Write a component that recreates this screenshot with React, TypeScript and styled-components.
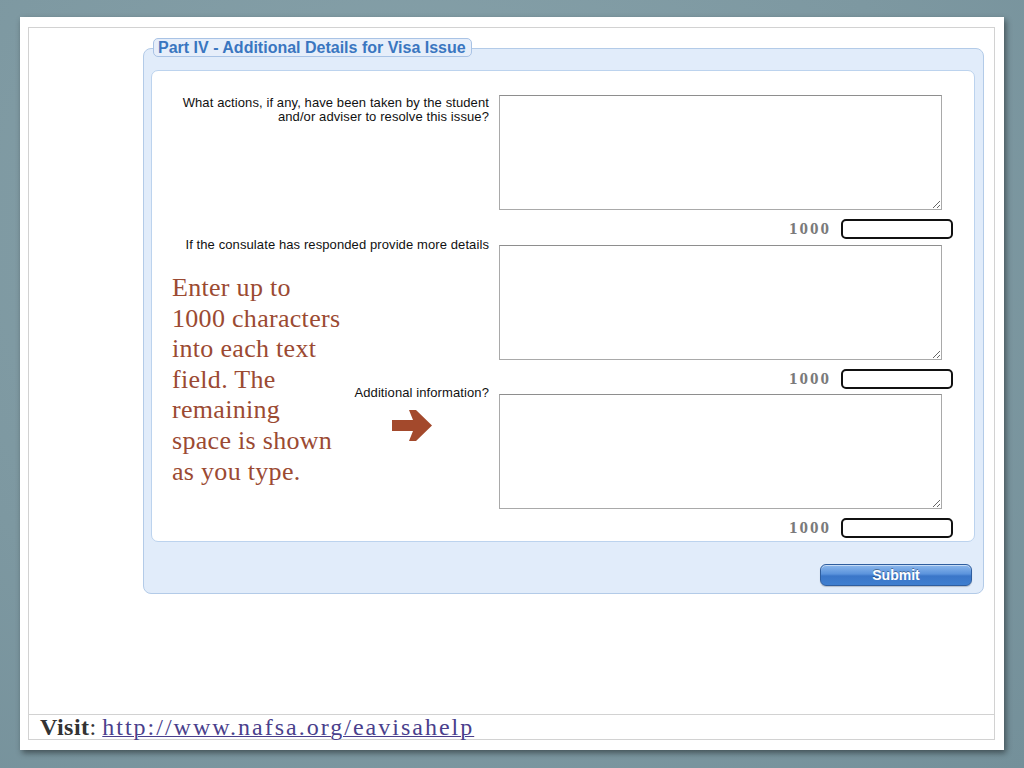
import React from 'react';
import styled, { createGlobalStyle } from 'styled-components';

const GlobalStyle = createGlobalStyle`
    html, body {
        margin: 0;
        padding: 0;
        background: #7f9aa2;
    }
    body {
        width: 1024px;
        height: 768px;
        overflow: hidden;
        background: radial-gradient(ellipse at 40% 30%, #87a2aa 0%, #7d98a1 60%, #74909a 100%);
    }
`;

const Slide = styled.div`
    margin: 17px 0 0 20px;
    width: 984px;
    height: 733px;
    background: #fff;
    box-shadow: 2px 3px 6px rgba(0, 0, 0, 0.45);
    padding: 10px 9px 10px 8px;
    box-sizing: border-box;
`;

const Frame = styled.div`
    height: 100%;
    border: 1px solid #d2d2d2;
    box-sizing: border-box;
    display: flex;
    flex-direction: column;
`;

const Content = styled.div`
    flex: 1;
    padding: 20px 0 0 114px;
`;

const FieldsetBox = styled.div`
    position: relative;
    width: 841px;
    height: 546px;
    box-sizing: border-box;
    background: #e1ecfa;
    border: 1px solid #b3cbe8;
    border-radius: 8px;
    padding: 21px 8px 0 7px;
    display: flex;
    flex-direction: column;
`;

const Legend = styled.div`
    position: absolute;
    top: -11px;
    left: 9px;
    height: 19px;
    padding: 0 5px 0 4px;
    box-sizing: border-box;
    background: #e6eefa;
    border: 1px solid #a9c3e5;
    border-radius: 5px;
    font-family: 'Liberation Sans', Arial, sans-serif;
    font-weight: bold;
    font-size: 16px;
    line-height: 17px;
    color: #3a76c0;
    white-space: nowrap;
`;

const Panel = styled.div`
    position: relative;
    width: 824px;
    height: 472px;
    box-sizing: border-box;
    background: #fff;
    border: 1px solid #bcd3ee;
    border-radius: 7px;
    padding: 24px 0 0 0;
`;

const Field = styled.div`
    margin-bottom: 5.5px;
`;

const FieldRow = styled.div`
    display: flex;
    align-items: flex-start;
    gap: 10px;
`;

const Label = styled.label<{ $raise: number }>`
    width: 337px;
    flex-shrink: 0;
    margin-top: ${p => -p.$raise}px;
    text-align: right;
    font-family: 'Liberation Sans', Arial, sans-serif;
    font-size: 13px;
    letter-spacing: 0.1px;
    line-height: 14px;
    color: #111;
`;

const TextArea = styled.textarea`
    display: block;
    width: 443px;
    height: 115px;
    margin: 0;
    box-sizing: border-box;
    border: 1px solid #a9a9a9;
    border-top-color: #8e8e8e;
    background: #fff;
    font-family: 'Liberation Sans', Arial, sans-serif;
    font-size: 12px;
`;

const CounterRow = styled.div`
    width: 801px;
    margin-top: 9px;
    display: flex;
    justify-content: flex-end;
    align-items: center;
    gap: 10px;
`;

const Count = styled.span`
    font-family: 'Liberation Serif', 'Times New Roman', serif;
    font-weight: bold;
    font-size: 17px;
    letter-spacing: 2px;
    color: #7a7a7a;
`;

const CountBox = styled.input`
    width: 112px;
    height: 20px;
    box-sizing: border-box;
    margin: 0;
    border: 2px solid #111;
    border-radius: 5px;
    background: #fff;
`;

const Note = styled.div`
    position: absolute;
    left: 20px;
    top: 202px;
    font-family: 'Liberation Serif', 'Times New Roman', serif;
    font-size: 26px;
    letter-spacing: 0.3px;
    line-height: 30.6px;
    color: #9b4a32;
    white-space: nowrap;
`;

const Arrow = styled.svg`
    position: absolute;
    left: 240px;
    top: 339px;
`;

const ButtonBar = styled.div`
    display: flex;
    justify-content: flex-end;
    padding: 22px 3px 0 0;
`;

const SubmitButton = styled.button`
    width: 152px;
    height: 22px;
    border: 1px solid #2f5e9f;
    border-radius: 6px;
    background: linear-gradient(#8db8ec 0%, #5a93dc 45%, #3a76c8 55%, #3f7fd0 100%);
    box-shadow: inset 0 1px 0 rgba(255, 255, 255, 0.5), 0 1px 1px rgba(0, 0, 0, 0.2);
    font-family: 'Liberation Sans', Arial, sans-serif;
    font-weight: bold;
    font-size: 14px;
    color: #fff;
    text-shadow: 0 -1px 0 rgba(0, 0, 0, 0.35);
    padding: 0;
`;

const Footer = styled.div`
    height: 24px;
    border-top: 1px solid #d2d2d2;
    padding-left: 11px;
    font-family: 'Liberation Serif', 'Times New Roman', serif;
    font-size: 24px;
    line-height: 24px;
    color: #333;
    white-space: nowrap;
`;

const Bold = styled.b`
    color: #333;
    letter-spacing: 0.5px;
`;

const Link = styled.a`
    color: #4a3f8c;
    text-decoration: underline;
    text-decoration-thickness: 1px;
    letter-spacing: 2px;
`;

const fields = [
    {
        label: (
            <>
                What actions, if any, have been taken by the student
                <br />
                and/or adviser to resolve this issue?
            </>
        ),
        raise: -1,
    },
    { label: 'If the consulate has responded provide more details', raise: 7 },
    { label: 'Additional information?', raise: 8 },
];

const App = () => {
    return (
        <>
            <GlobalStyle />
            <Slide>
                <Frame>
                    <Content>
                        <FieldsetBox>
                            <Legend>Part IV - Additional Details for Visa Issue</Legend>
                            <Panel>
                                {fields.map((field, index) => (
                                    <Field key={index}>
                                        <FieldRow>
                                            <Label $raise={field.raise}>{field.label}</Label>
                                            <TextArea />
                                        </FieldRow>
                                        <CounterRow>
                                            <Count>1000</Count>
                                            <CountBox readOnly />
                                        </CounterRow>
                                    </Field>
                                ))}
                                <Note>
                                    Enter up to
                                    <br />
                                    1000 characters
                                    <br />
                                    into each text
                                    <br />
                                    field. The
                                    <br />
                                    remaining
                                    <br />
                                    space is shown
                                    <br />
                                    as you type.
                                </Note>
                                <Arrow width="40" height="31" viewBox="0 0 40 31">
                                    <path d="M0 10 H21 L17 0 H24 L40 15.5 L24 31 H17 L21 21 H0 Z" fill="#a3492c" />
                                </Arrow>
                            </Panel>
                            <ButtonBar>
                                <SubmitButton type="button">Submit</SubmitButton>
                            </ButtonBar>
                        </FieldsetBox>
                    </Content>
                    <Footer>
                        <Bold>Visit</Bold>: <Link href="#">http://www.nafsa.org/eavisahelp</Link>
                    </Footer>
                </Frame>
            </Slide>
        </>
    );
};

export default App;
